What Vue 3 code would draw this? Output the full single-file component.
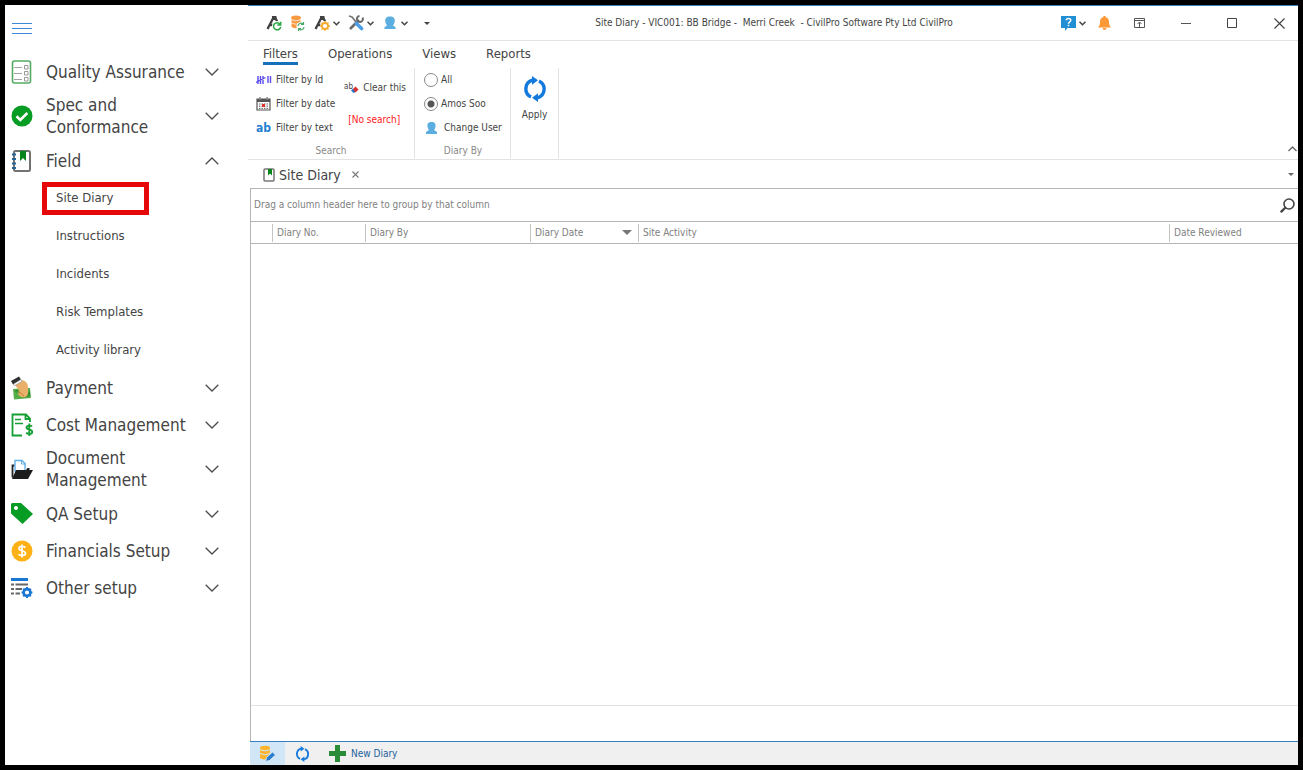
<script setup>
import { ref } from 'vue'

const sections = [
  { id: 'qa', label: 'Quality Assurance' },
  { id: 'spec', label: 'Spec and Conformance', tall: true },
  { id: 'field', label: 'Field', children: ['Site Diary', 'Instructions', 'Incidents', 'Risk Templates', 'Activity library'] },
  { id: 'payment', label: 'Payment' },
  { id: 'cost', label: 'Cost Management' },
  { id: 'document', label: 'Document Management', tall: true },
  { id: 'tag', label: 'QA Setup' },
  { id: 'financials', label: 'Financials Setup' },
  { id: 'other', label: 'Other setup' },
]
const tabs = ['Filters', 'Operations', 'Views', 'Reports']
const activeTab = ref('Filters')
const diaryBy = ref('amos')
</script>

<template>
  <div class="window">
    <aside class="sidebar">
      <button class="burger" aria-label="Toggle menu">
        <svg width="22" height="14" viewBox="0 0 22 14"><path d="M1 1.500h20M1 6.500h20M1 11.500h20" stroke="#3c8ad8" stroke-width="1.200" /></svg>
      </button>
      <nav class="nav">
        <template v-for="item in sections" :key="item.id">
          <button class="nav-item" :class="{ tall: item.tall }" :aria-expanded="!!item.children">
            <svg class="nav-icon" viewBox="0 0 22 24" width="22" height="24">
              <template v-if="item.id === 'qa'">
                <rect x="1.500" y="1" width="18" height="22" rx="2" fill="#fff" stroke="#55aa63" stroke-width="1.600" />
                <path d="M3 7.500h8M3 13.500h8M3 19.500h8" stroke="#a2a2a2" stroke-width="1.200" />
                <path d="M13.500 5.500h3.500v3.500h-3.500zM13.500 11.500h3.500v3.500h-3.500zM13.500 17.500h3.500v3.500h-3.500z" fill="none" stroke="#999" />
              </template>
              <template v-else-if="item.id === 'spec'">
                <circle cx="11" cy="12" r="10.500" fill="#079c24" />
                <path d="M5.500 12.300l3.800 3.700 7-7" fill="none" stroke="#fff" stroke-width="2.600" />
              </template>
              <template v-else-if="item.id === 'field'">
                <rect x="3" y="2" width="16" height="20" rx="1.500" fill="#fff" stroke="#727272" stroke-width="2" />
                <path d="M9 2h6v10l-3-3-3 3z" fill="#07851b" />
                <path d="M1 5.500h4M1 10h4M1 14.500h4M1 19h4" stroke="#26679b" stroke-width="1.800" />
              </template>
              <template v-else-if="item.id === 'payment'">
                <path d="M2 13l17-1 1 10-17 1.500z" fill="#55ad47" />
                <path d="M4 14l4 0-3 3zM19 14v6l-4 1z" fill="#368b32" />
                <path d="M4 9l7-5c4 1 6 4 6 7v4c0 3 0 5-3 6-3 1-6-1-7-3 2-1 2-3 0-5z" fill="#eab06a" />
                <path d="M7 16c3 0 4 3 6 4" fill="none" stroke="#c77d38" />
                <path d="M0 5L8 .5l2 3-8 5z" fill="#303030" />
                <path d="M2 8.500l8-5 1 2-7 4z" fill="#fff" stroke="#888" stroke-width=".6" />
              </template>
              <template v-else-if="item.id === 'cost'">
                <path d="M11 22.500H1.500v-21H15l4 4V9M14.500 1.500v4.500H19" fill="none" stroke="#15a034" stroke-width="1.800" />
                <path d="M4 6.500h6M4 10.500h8" stroke="#15a034" stroke-width="1.700" />
                <path d="M21 13.500c-1-1.300-5.500-1.300-5.500 1.100 0 2.800 5.800 1.400 5.800 4.300 0 2.500-4.800 2.500-6.100.8M18.300 10.500v12.500" fill="none" stroke="#15a034" stroke-width="1.900" />
              </template>
              <template v-else-if="item.id === 'document'">
                <path d="M1.500 20.500V8.500h2" fill="none" stroke="#222" stroke-width="1.800" />
                <path d="M4 14V3.500h7l3 3V14z" fill="#fff" stroke="#62afe8" stroke-width="1.400" />
                <path d="M10.500 3v4H15" fill="none" stroke="#62afe8" />
                <path d="M5 13h10l1.500-2h2v2H22l-5 9H1z" fill="#1c1c1c" />
              </template>
              <template v-else-if="item.id === 'tag'">
                <path fill-rule="evenodd" d="M1 1h9l12 11-10.500 10L0 11.500V2zM5 4a2 2 0 1 0 .01 0z" fill="#079c24" />
              </template>
              <template v-else-if="item.id === 'financials'">
                <circle cx="11" cy="12" r="10.500" fill="#ffb116" />
                <path d="M14.300 8.600c-1.500-1.900-6.300-1.700-6.300.8 0 3 6.500 1.800 6.500 5 0 2.500-5.200 2.700-6.900.8M11 5.500v13" fill="none" stroke="#fff" stroke-width="1.700" />
              </template>
              <template v-else>
                <path d="M0 3.500h17" stroke="#1877d2" stroke-width="3" />
                <path d="M0 8.500h3M4.500 8.500H17M0 13h3M4.500 13H11M0 17.500h3M4.500 17.500H9" stroke="#666" stroke-width="2.200" />
                <circle cx="16" cy="16.500" r="3.400" fill="none" stroke="#1877d2" stroke-width="2.600" />
                <path d="M16 11.100V13M16 20v1.900M10.600 16.500h1.900M19.500 16.500h1.900M12.200 12.700l1.300 1.300M18.500 19l1.300 1.300M12.200 20.300l1.300-1.300M18.500 14l1.300-1.300" stroke="#1877d2" stroke-width="2" />
              </template>
            </svg>
            <span class="nav-label">{{ item.label }}</span>
            <svg class="nav-chevron" width="14" height="8" viewBox="0 0 14 8">
              <path :d="item.children ? 'M.7 7.300L7 1l6.300 6.300' : 'M.7.7L7 7 13.300.7'" fill="none" stroke="#4c4c4c" stroke-width="1.300" />
            </svg>
          </button>
          <div v-if="item.children" class="children">
            <button v-for="c in item.children" :key="c" class="child" :class="{ marked: c === 'Site Diary' }">{{ c }}</button>
          </div>
        </template>
      </nav>
    </aside>

    <main class="main">
      <header class="titlebar">
        <div class="quick">
          <button aria-label="Refresh project">
            <svg width="16" height="16" viewBox="0 0 16 16"><path d="M1.500 14L7 3.500h2.500L12 8M3.500 9.800q4 1 7-2" fill="none" stroke="#414141" stroke-width="2.300" /><path d="M6 1h4.500v4H6z" fill="#414141" /><circle cx="11" cy="11" r="5" fill="#fff" /><path d="M14 9a3.600 3.600 0 1 0 .7 3M14.700 6.800V10h-3.400" fill="none" stroke="#28a745" stroke-width="1.500" /></svg>
          </button>
          <button aria-label="Refresh data">
            <svg width="16" height="16" viewBox="0 0 16 16"><path d="M1.500 2.500v9.500q4.500 2.500 9 0V2.500z" fill="#f99a43" /><ellipse cx="6" cy="2.500" rx="4.800" ry="2" fill="#f99a43" /><path d="M1 4.600q5 2.500 10 0M1 8q5 2.500 10 0" fill="none" stroke="#fff" stroke-width=".7" /><circle cx="11" cy="11.500" r="4.500" fill="#fff" /><path d="M8 11a3 3 0 0 1 5-2M14 12a3 3 0 0 1-5 2M13.500 7v2.500H11M8.500 16v-2.500H11" fill="none" stroke="#48a866" stroke-width="1.200" /></svg>
          </button>
          <button aria-label="Project settings" class="drop">
            <svg width="16" height="16" viewBox="0 0 16 16"><path d="M1.500 14L7 3.500h2.500L12 8M3.500 9.800q4 1 7-2" fill="none" stroke="#414141" stroke-width="2.300" /><path d="M6 1h4.500v4H6z" fill="#414141" /><circle cx="11" cy="11" r="5" fill="#fff" /><circle cx="11" cy="11" r="3" fill="none" stroke="#f5ab2f" stroke-width="1.800" /><path d="M11 6v2M11 14v2M6 11h2M14 11h2M7.500 7.500L9 9M13 13l1.500 1.500M7.500 14.500L9 13M13 9l1.500-1.500" stroke="#f5ab2f" stroke-width="1.300" /></svg>
            <svg width="7" height="5" viewBox="0 0 7 5"><path d="M.5.700l3 3 3-3" fill="none" stroke="#444" stroke-width="1.500" /></svg>
          </button>
          <button aria-label="Tools" class="drop">
            <svg width="16" height="16" viewBox="0 0 16 16"><path d="M2 14l9-9" stroke="#6b6b6b" stroke-width="2.600" /><path d="M14.500 2.500a3 3 0 1 1-3-1.500" fill="none" stroke="#6b6b6b" stroke-width="2" /><path d="M1 1l3 1 4 5" fill="none" stroke="#787878" stroke-width="1.800" /><path d="M8.500 8.500l5 5" stroke="#4d9fe8" stroke-width="3.600" stroke-linecap="round" /></svg>
            <svg width="7" height="5" viewBox="0 0 7 5"><path d="M.5.700l3 3 3-3" fill="none" stroke="#444" stroke-width="1.500" /></svg>
          </button>
          <button aria-label="User" class="drop">
            <svg width="16" height="16" viewBox="0 0 16 16"><path d="M8 1.500c3.500 0 5.200 2 4.700 5-.2 2-1 3.200-1.900 4l2.700 1.500v2h-11v-2l2.700-1.500c-.9-.8-1.700-2-1.900-4C2.800 3.500 4.500 1.500 8 1.500z" fill="#5cade0" /></svg>
            <svg width="7" height="5" viewBox="0 0 7 5"><path d="M.5.700l3 3 3-3" fill="none" stroke="#444" stroke-width="1.500" /></svg>
          </button>
          <button aria-label="Customize toolbar" class="more"><svg width="6" height="3" viewBox="0 0 6 3"><path d="M0 0h6L3 3z" fill="#444" /></svg></button>
        </div>
        <h1 class="title">Site Diary - VIC001: BB Bridge -&nbsp; Merri Creek&nbsp; - CivilPro Software Pty Ltd CivilPro</h1>
        <div class="controls">
          <button aria-label="Help" class="drop help">
            <svg width="15" height="15" viewBox="0 0 15 15"><path d="M0 0h15v12H6.500L4 15v-3H0z" fill="#218fd3" /><path d="M5.300 4.300c0-2.500 4.500-2.500 4.500 0 0 1.500-2.300 1.600-2.300 3.400M7.500 8.800v1.500" fill="none" stroke="#fff" stroke-width="1.500" /></svg>
            <svg width="7" height="5" viewBox="0 0 7 5"><path d="M.5.700l3 3 3-3" fill="none" stroke="#444" stroke-width="1.500" /></svg>
          </button>
          <button aria-label="Notifications" class="bell"><svg width="13" height="14" viewBox="0 0 13 14"><path d="M6.500 0c1 0 1.300.6 1.300 1.200C10 1.700 11 3.500 11 6c0 3 .8 4 2 5.500H0C1.200 10 2 9 2 6c0-2.500 1-4.300 3.200-4.800C5.200.600 5.500 0 6.500 0zM4.500 12h4c-.3 2.500-3.700 2.500-4 0z" fill="#fc9836" /></svg></button>
          <button aria-label="Ribbon display options"><svg width="11" height="10" viewBox="0 0 11 10"><path d="M.5.500h10v9H.5zM.5 2.500h10M5.500 9V4.500M3.500 6l2-2 2 2" fill="none" stroke="#555" /></svg></button>
          <button aria-label="Minimize"><svg width="10" height="10" viewBox="0 0 10 10"><path d="M0 5.500h10" stroke="#555" /></svg></button>
          <button aria-label="Maximize"><svg width="11" height="10" viewBox="0 0 11 10"><path d="M.5.500h9v9h-9z" fill="none" stroke="#444" /></svg></button>
          <button aria-label="Close"><svg width="11" height="11" viewBox="0 0 11 11"><path d="M.5.500l10 10M10.500.500l-10 10" stroke="#444" stroke-width="1.200" /></svg></button>
        </div>
      </header>

      <section class="ribbon">
        <div class="tabs">
          <button v-for="t in tabs" :key="t" class="tab" :class="{ active: t === activeTab }" @click="activeTab = t">{{ t }}</button>
        </div>
        <div class="groups">
          <div class="group search">
            <div class="group-body">
              <div class="commands">
                <button class="cmd"><svg width="16" height="14" viewBox="0 0 16 14"><path d="M2 3v8M4.500 3v8M7 3v8M0 9.500L9.500 4.500M12 3v7M14.500 3v7" stroke="#5a4af0" stroke-width="1.400" /></svg>Filter by Id</button>
                <button class="cmd"><svg width="16" height="14" viewBox="0 0 16 14"><path d="M1 2h13v11H1z" fill="#fff" stroke="#555" stroke-width="1.200" /><path d="M1 3.500h13" stroke="#555" stroke-width="3" /><path d="M4 0v3M11 0v3" stroke="#888" stroke-width="1.500" /><path d="M3 7h9M3 9.200h9M3 11.400h9" stroke="#555" stroke-dasharray="1.400 1.100" /><path d="M6 7h3v3H6z" fill="#e5352f" /></svg>Filter by date</button>
                <button class="cmd"><b class="ab">ab</b>Filter by text</button>
              </div>
              <div class="status">
                <button class="cmd clear"><svg width="15" height="14" viewBox="0 0 15 14"><text x="0" y="8" class="ab-small">ab</text><path d="M7 9.500l2-2 2.800 2.800-2 2z" fill="#2779c9" /><path d="M9 8l2.500-2.500L14.500 8.500l-3 3z" fill="#d92c2c" /></svg>Clear this</button>
                <span class="none">[No search]</span>
              </div>
            </div>
            <span class="caption">Search</span>
          </div>
          <div class="group diary">
            <div class="group-body commands">
              <label class="radio"><input v-model="diaryBy" type="radio" name="diary-by" value="all">All</label>
              <label class="radio"><input v-model="diaryBy" type="radio" name="diary-by" value="amos">Amos Soo</label>
              <button class="cmd user"><svg width="14" height="14" viewBox="0 0 14 14"><path d="M7.500 1c3.300 0 4.500 2 4 4.500-.2 1.700-.8 2.800-1.500 3.500l3 2v2H2v-2l3-2c-.7-.7-1.300-1.800-1.500-3.500C3 3 4.200 1 7.500 1z" fill="#5cade0" /></svg>Change User</button>
            </div>
            <span class="caption">Diary By</span>
          </div>
          <div class="group">
            <button class="apply">
              <svg width="22" height="26" viewBox="0 0 22 26"><path d="M7 21A9 9 0 0 1 8.500 4.200M15 5a9 9 0 0 1-1.500 16.800" fill="none" stroke="#1479dc" stroke-width="3.400" /><path d="M8 0l6 4.300-6 4.500zM14 17.200V26l-6-4.300z" fill="#1479dc" /></svg>
              Apply
            </button>
          </div>
          <button class="collapse" aria-label="Collapse ribbon"><svg width="9" height="6" viewBox="0 0 9 6"><path d="M.5 5l4-4 4 4" fill="none" stroke="#666" stroke-width="1.300" /></svg></button>
        </div>
      </section>

      <div class="doc-tabs">
        <svg width="12" height="14" viewBox="0 0 12 14"><rect x="1" y="1" width="10" height="12" rx="1" fill="#fff" stroke="#777" stroke-width="1.500" /><path d="M5 1h4v6.500l-2-2-2 2z" fill="#07851b" /></svg>
        <span class="doc-name">Site Diary</span>
        <button class="doc-close" aria-label="Close tab"><svg width="7" height="7" viewBox="0 0 7 7"><path d="M.5.500l6 6M6.500.500l-6 6" stroke="#777" stroke-width="1.100" /></svg></button>
        <button class="doc-menu" aria-label="Open documents"><svg width="6" height="3" viewBox="0 0 6 3"><path d="M0 0h6L3 3z" fill="#666" /></svg></button>
      </div>

      <section class="grid">
        <div class="group-panel">
          <span>Drag a column header here to group by that column</span>
          <button aria-label="Find"><svg width="15" height="15" viewBox="0 0 15 15"><circle cx="9" cy="6" r="5" fill="none" stroke="#444" stroke-width="1.600" /><path d="M5.500 9.500L.8 14.200" stroke="#444" stroke-width="2.300" /></svg></button>
        </div>
        <table class="table">
          <thead>
            <tr>
              <th class="c-mark"></th>
              <th class="c-no"><span>Diary No.</span></th>
              <th class="c-by"><span>Diary By</span></th>
              <th class="c-date"><span>Diary Date <svg width="10" height="5" viewBox="0 0 10 5"><path d="M0 0h10L5 5z" fill="#777" /></svg></span></th>
              <th><span>Site Activity</span></th>
              <th class="c-rev"><span>Date Reviewed</span></th>
            </tr>
          </thead>
        </table>
        <div class="rows"></div>
        <div class="summary"></div>
      </section>

      <footer class="bottom">
        <button class="edit" aria-label="Edit data"><svg width="17" height="17" viewBox="0 0 17 17"><path d="M1 2.500V13q5 3 10 0V2.500z" fill="#ffb52b" /><ellipse cx="6" cy="2.700" rx="5" ry="2" fill="#ffb52b" /><path d="M1 4.700q5 2.500 10 0M1 8.500q5 2.500 10 0" fill="none" stroke="#d1e6f7" /><path d="M6.500 16.500l1-4 6-5.500 3 3-6 5.500z" fill="#2b7ccf" stroke="#d1e6f7" /></svg></button>
        <button class="reload" aria-label="Refresh"><svg width="15" height="16" viewBox="0 0 22 26"><path d="M7 21A9 9 0 0 1 8.500 4.200M15 5a9 9 0 0 1-1.500 16.800" fill="none" stroke="#1479dc" stroke-width="3" /><path d="M8 0l6 4.300-6 4.500zM14 17.200V26l-6-4.300z" fill="#1479dc" /></svg></button>
        <button class="new"><svg width="17" height="17" viewBox="0 0 17 17"><path d="M8.500 0v17M0 8.500h17" stroke="#2b8c37" stroke-width="5" /></svg>New Diary</button>
      </footer>
    </main>
  </div>
</template>

<style>
body { margin: 0; background: #000; }
</style>

<style scoped>
* { box-sizing: border-box; }
.window { display: flex; min-height: 100vh; border: 5px solid #000; background: #fff; color: #444; font: 10px/14px "DejaVu Sans Condensed", "DejaVu Sans", sans-serif; font-stretch: condensed; }
button { display: flex; align-items: center; border: 0; padding: 0; background: none; color: inherit; font: inherit; text-align: left; }
svg { display: block; flex: none; }

.sidebar { flex: 0 0 243px; }
.burger { margin: 17px 0 0 6px; }
.nav { padding-top: 17px; }
.nav-item { width: 100%; height: 37px; padding: 0 29px 0 6px; font-size: 17px; line-height: 22px; }
.nav-item.tall { height: 52px; }
.nav-label { flex: 1; padding: 0 18px 0 13px; white-space: nowrap; }
.nav-item.tall .nav-label { padding-right: 40px; white-space: normal; }
.children { display: grid; grid-auto-rows: 1fr; align-items: center; height: 190px; }
.child { width: 107px; height: 33px; margin-left: 37px; padding-left: 14px; font-size: 13px; white-space: nowrap; }
.marked { padding-left: 9px; border: 5px solid #e60808; }

.main { flex: 1; display: flex; flex-direction: column; min-width: 0; border-top: 1px solid #3a7fbd; }
.titlebar { display: flex; align-items: center; height: 35px; padding-right: 13px; border-bottom: 1px solid #e3e3e3; }
.quick { display: flex; align-items: center; gap: 8px; padding-left: 18px; }
.drop { gap: 3px; }
.more { margin-left: 8px; }
.title { flex: 1; margin: 0; padding-left: 57px; font-size: 10px; font-weight: 400; text-align: center; white-space: nowrap; }
.controls { display: flex; align-items: center; gap: 36px; }
.help { margin-right: -24px; }
.bell { margin-right: -13px; }

.ribbon { border-bottom: 1px solid #e3e3e3; }
.tabs { display: flex; gap: 30px; height: 26px; padding-left: 15px; }
.tab { height: 24px; padding-top: 4px; border-bottom: 3px solid transparent; font-size: 13px; }
.tab.active { border-color: #1671bd; }
.groups { display: flex; height: 92px; padding: 1px 0; }
.group { display: flex; flex-direction: column; justify-content: space-between; border-right: 1px solid #e3e3e3; }
.search { width: 167px; padding-left: 8px; }
.diary { width: 96px; padding-left: 9px; }
.group-body { display: flex; }
.commands { display: flex; flex-direction: column; }
.cmd, .radio { display: flex; align-items: center; gap: 4px; height: 24px; white-space: nowrap; }
.ab { width: 16px; color: #2680d0; font-size: 12px; }
.ab-small { font-size: 8px; fill: #444; }
.status { display: flex; flex-direction: column; gap: 8px; padding: 8px 0 0 9px; }
.none { padding-left: 4px; line-height: 24px; color: #ff1919; white-space: nowrap; }
.radio { gap: 3px; }
.radio input { appearance: none; width: 14px; height: 14px; margin: 0; border: 1px solid #888; border-radius: 50%; background: #fff; }
.radio input:checked { background: radial-gradient(circle, #555 3px, #fff 4px); }
.user { gap: 6px; }
.caption { padding-right: 8px; color: #888; text-align: center; }
.apply { flex-direction: column; gap: 6px; width: 47px; padding-top: 8px; }
.collapse { align-self: flex-end; margin: 0 1px 6px auto; }

.doc-tabs { display: flex; align-items: center; height: 28px; padding: 1px 4px 0 15px; }
.doc-name { padding: 0 11px 0 4px; font-size: 14px; }
.doc-menu { margin-left: auto; }
.grid { flex: 1; display: flex; flex-direction: column; margin-left: 2px; border-top: 1px solid #b5b5b5; border-left: 1px solid #b5b5b5; color: #808080; }
.group-panel { display: flex; align-items: center; justify-content: space-between; height: 32px; padding: 0 3px; }
.table { width: 100%; table-layout: fixed; border-collapse: collapse; border-top: 1px solid #b5b5b5; border-bottom: 1px solid #b5b5b5; }
th { height: 22px; padding: 0; font-weight: 400; text-align: left; }
th span { display: flex; align-items: center; justify-content: space-between; height: 18px; padding: 0 6px 0 4px; border-left: 1px solid #c4c4c4; white-space: nowrap; }
.c-mark { width: 21px; }
.c-no { width: 93px; }
.c-by { width: 165px; }
.c-date { width: 108px; }
.c-rev { width: 129px; }
.rows { flex: 1; border-bottom: 1px solid #e3e3e3; }
.summary { height: 35px; }
.bottom { display: flex; height: 24px; margin-left: 2px; border-top: 1px solid #3a7fbd; background: #f0f0f0; color: #22629c; }
.edit { justify-content: center; width: 35px; background: #d1e6f7; }
.reload { margin-left: 10px; }
.new { gap: 5px; margin-left: 19px; }
</style>
